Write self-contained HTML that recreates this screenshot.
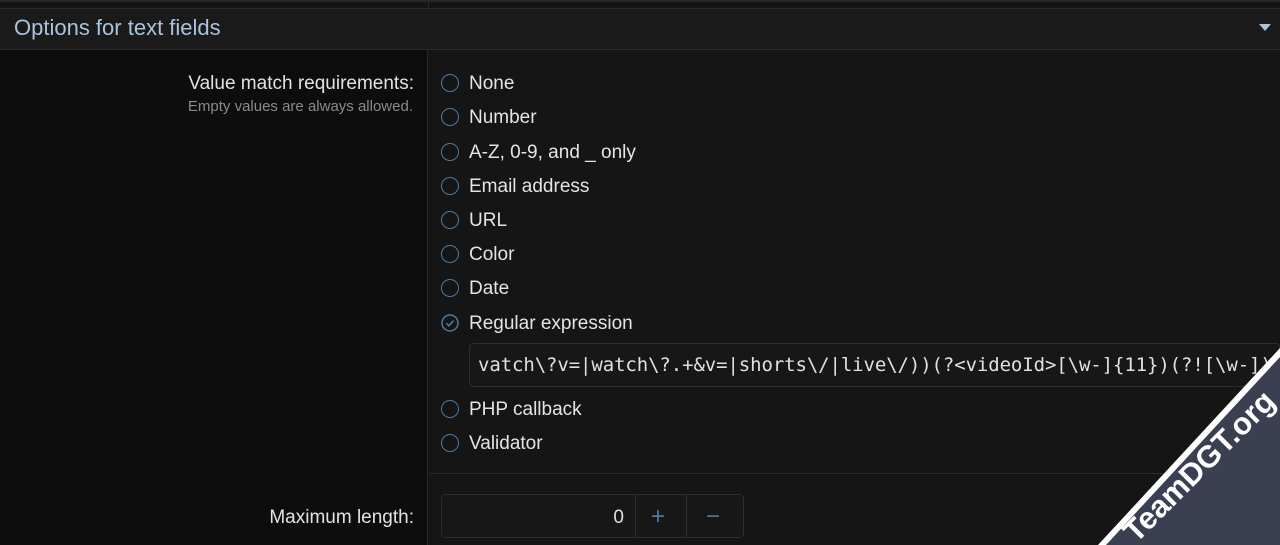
<!DOCTYPE html>
<html><head><meta charset="utf-8"><style>
*{box-sizing:border-box;margin:0;padding:0}
body{width:1280px;height:545px;overflow:hidden;background:#151515;font-family:"Liberation Sans",sans-serif;position:relative}
.top{position:absolute;left:0;top:0;width:1280px;height:8px;background:#141414;border-top:2px solid #262626}
.top i{position:absolute;left:428px;top:0;width:1px;height:8px;background:#2a2a2a}
.hdr{position:absolute;left:0;top:8px;width:1280px;height:42px;background:#1a1a1a;border-top:1px solid #2a2a2a;border-bottom:1px solid #2a2a2a}
.hdr span{position:absolute;left:14px;top:6px;font-size:22px;color:#a9c3dc}
.hdr b{position:absolute;right:9px;top:15px;width:0;height:0;border-left:6px solid transparent;border-right:6px solid transparent;border-top:7px solid #a9c3dc}
.left{position:absolute;left:0;top:50px;width:428px;height:495px;background:#0d0d0d;border-right:1px solid #262626}
.lbl{position:absolute;right:866px;text-align:right;color:#e2e2e2;font-size:19px}
.hint{position:absolute;right:867px;top:98px;font-size:15px;color:#8a8a8a}
.r{position:absolute;left:441px;height:20px;font-size:19px;color:#e4e4e4}
.r i{position:absolute;left:0;top:1px;width:18px;height:18px;border:1.5px solid #4a7aa6;border-radius:50%}
.r span{position:absolute;left:28px;top:0;white-space:nowrap}
.rx{position:absolute;left:469px;top:343px;width:811px;height:44px;border:1px solid #2e2e2e;border-radius:4px;background:#171717;overflow:hidden}
.rx span{position:absolute;left:8px;top:10px;font-family:"DejaVu Sans Mono","Liberation Mono",monospace;font-size:19px;color:#e0e0e0;white-space:nowrap;letter-spacing:-0.1px}
.sep{position:absolute;left:429px;top:473px;width:851px;height:1px;background:#2a2a2a}
.num{position:absolute;left:441px;top:494px;width:303px;height:44px;border:1px solid #2e2e2e;border-radius:5px;background:#171717}
.num .v{position:absolute;left:0;width:182px;top:12px;text-align:right;font-size:19px;color:#e0e0e0}
.num .b1{position:absolute;left:193px;top:0;width:1px;height:42px;background:#2e2e2e}
.num .b2{position:absolute;left:244px;top:0;width:1px;height:42px;background:#2e2e2e}
.num .p,.num .m{position:absolute;top:8px;font-size:24px;color:#4a7aa6}
.num .p{left:209px}.num .m{left:264px}
</style></head><body>
<div class="top"><i></i></div>
<div class="hdr"><span>Options for text fields</span><b></b></div>
<div class="left"></div>
<div class="lbl" style="top:73px">Value match requirements:</div>
<div class="hint">Empty values are always allowed.</div>
<div class="r" style="top:73px"><i></i><span>None</span></div>
<div class="r" style="top:107px"><i></i><span>Number</span></div>
<div class="r" style="top:142px"><i></i><span>A-Z, 0-9, and _ only</span></div>
<div class="r" style="top:176px"><i></i><span>Email address</span></div>
<div class="r" style="top:210px"><i></i><span>URL</span></div>
<div class="r" style="top:244px"><i></i><span>Color</span></div>
<div class="r" style="top:278px"><i></i><span>Date</span></div>
<div class="r" style="top:313px"><svg style="position:absolute;left:0;top:1px" width="18" height="18" viewBox="0 0 18 18"><circle cx="9" cy="9" r="8" fill="none" stroke="#4a7aa6" stroke-width="1.5"/><path d="M5.3 9.2l2.5 2.5 4.8-5" fill="none" stroke="#4a7aa6" stroke-width="1.6"/></svg><span>Regular expression</span></div>
<div class="rx"><span>vatch\?v=|watch\?.+&amp;v=|shorts\/|live\/))(?&lt;videoId&gt;[\w-]{11})(?![\w-])</span></div>
<div class="r" style="top:399px"><i></i><span>PHP callback</span></div>
<div class="r" style="top:433px"><i></i><span>Validator</span></div>
<div class="sep"></div>
<div class="lbl" style="top:507px">Maximum length:</div>
<div class="num"><div class="v">0</div><div class="b1"></div><div class="p">+</div><div class="b2"></div><div class="m">−</div></div>
<svg style="position:absolute;left:0;top:0" width="1280" height="545">
<polygon points="1098,545 1280,348 1280,545" fill="#fff"/>
<polygon points="1106,545 1280,357 1280,545" fill="#3b3f52"/>
<text x="0" y="0" transform="translate(1136,544) rotate(-45)" font-family="Liberation Sans,sans-serif" font-weight="bold" font-size="31" fill="#fff">TeamDGT.org</text>
</svg>
</body></html>
